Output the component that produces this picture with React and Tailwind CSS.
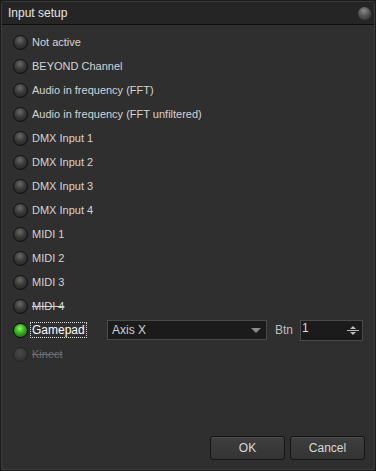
import React from 'react';

const options = [
  { label: 'Not active' },
  { label: 'BEYOND Channel' },
  { label: 'Audio in frequency (FFT)' },
  { label: 'Audio in frequency (FFT unfiltered)' },
  { label: 'DMX Input 1' },
  { label: 'DMX Input 2' },
  { label: 'DMX Input 3' },
  { label: 'DMX Input 4' },
  { label: 'MIDI 1' },
  { label: 'MIDI 2' },
  { label: 'MIDI 3' },
  { label: 'MIDI 4', struck: true },
  { label: 'Gamepad', checked: true },
  { label: 'Kinect', struck: true, disabled: true },
];

const Radio = ({ checked, disabled }) => (
  <span
    className={`block w-[15px] h-[15px] rounded-full border shrink-0 ${
      checked
        ? 'border-[#0b0b0b] bg-[radial-gradient(circle_at_45%_35%,#9af07a_0%,#3fbf1f_35%,#1e7a0c_75%,#0f3a06_100%)]'
        : disabled
        ? 'border-[#222] bg-[radial-gradient(circle_at_45%_35%,#4a4a4a_0%,#363636_60%,#2a2a2a_100%)]'
        : 'border-[#101010] bg-[radial-gradient(circle_at_45%_30%,#6a6a6a_0%,#3a3a3a_45%,#1c1c1c_100%)]'
    }`}
  />
);

export default function App() {
  return (
    <div
      className="w-[376px] h-[471px] bg-[#1b1b1b] p-px flex flex-col text-[11px] text-[#d4d4d4]"
      style={{ fontFamily: '"Liberation Sans", Arial, sans-serif' }}
    >
      <div className="flex-1 flex flex-col bg-[#2f2f2f] border border-[#3a3a3a] rounded-t-[3px]">
        <div className="h-[23px] shrink-0 flex items-center justify-between pl-[6px] pr-[3px] bg-[#252525] border-b border-[#0e0e0e]">
          <span className="text-[12px] text-[#e6e6e6]">Input setup</span>
          <span className="w-[13px] h-[13px] rounded-full bg-[radial-gradient(circle_at_45%_30%,#8a8a8a_0%,#555_45%,#2a2a2a_100%)]" />
        </div>
        <div className="flex-1 flex flex-col pl-[11px] pr-[11px] pt-[5px]">
          {options.map((o) => (
            <div key={o.label} className="h-[24px] flex items-center">
              <Radio checked={o.checked} disabled={o.disabled} />
              <span
                className={`ml-[3px] px-px leading-[14px] ${o.struck ? 'line-through' : ''} ${
                  o.disabled ? 'text-[#6e6e6e]' : ''
                } ${o.checked ? 'outline outline-1 outline-dotted outline-[#dcdcdc] text-[12px] text-white' : ''}`}
              >
                {o.label}
              </span>
              {o.checked && (
                <div className="flex items-center ml-auto">
                  <div className="w-[160px] h-[20px] bg-[#1b1b1b] border border-[#4a4a4a] flex items-center justify-between px-[4px]">
                    <span className="text-[12px] text-[#cfcfcf]">Axis X</span>
                    <span className="w-0 h-0 border-l-[5px] border-r-[5px] border-t-[5px] border-l-transparent border-r-transparent border-t-[#8a8a8a] mr-[1px]" />
                  </div>
                  <span className="ml-[8px] mr-[7px] text-[12px] text-[#bdbdbd]">Btn</span>
                  <div className="w-[63px] h-[21px] bg-[#1b1b1b] border border-[#4a4a4a] flex items-start justify-between pl-[1px] pr-[2px]">
                    <span className="text-[12px] text-[#dcdcdc] leading-[15px]">1</span>
                    <div className="flex flex-col items-center justify-center h-full w-[14px] gap-[1px]">
                      <span className="w-0 h-0 border-l-[3px] border-r-[3px] border-b-[3px] border-l-transparent border-r-transparent border-b-[#bbb]" />
                      <span className="w-[12px] h-px bg-[#bbb]" />
                      <span className="w-0 h-0 border-l-[3px] border-r-[3px] border-t-[3px] border-l-transparent border-r-transparent border-t-[#bbb]" />
                    </div>
                  </div>
                </div>
              )}
            </div>
          ))}
          <div className="flex-1" />
          <div className="flex justify-end gap-[5px] pb-[9px] -mr-[2px]">
            <button className="w-[75px] h-[24px] rounded-[3px] border border-[#151515] bg-[linear-gradient(#3e3e3e,#343434)] shadow-[inset_0_1px_0_#4c4c4c] text-[12px] text-[#d8d8d8]">
              OK
            </button>
            <button className="w-[75px] h-[24px] rounded-[3px] border border-[#151515] bg-[linear-gradient(#3e3e3e,#343434)] shadow-[inset_0_1px_0_#4c4c4c] text-[12px] text-[#d8d8d8]">
              Cancel
            </button>
          </div>
        </div>
      </div>
    </div>
  );
}
